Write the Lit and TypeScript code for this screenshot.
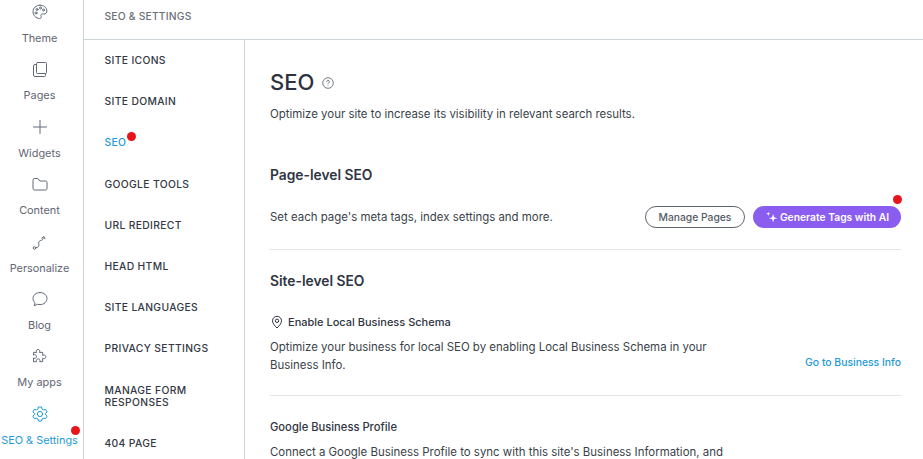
import { LitElement, html, css, svg } from "lit";
import { customElement } from "lit/decorators.js";

const stroke = (c: unknown) => html`<svg class="ic" viewBox="0 0 20 20" fill="none" stroke="currentColor" stroke-width="1" stroke-linecap="round" stroke-linejoin="round">${c}</svg>`;

const rail = [
  { label: "Theme", icon: svg`<path d="M10 3.200c-4 0-7 2.800-7 6.400 0 3.700 3 6.900 6.600 6.900 1.200 0 1.800-.8 1.600-1.700-.2-1-.6-1.500-.1-2.200.6-.8 1.700-.5 2.900-.6 1.900-.1 2.900-1.300 2.900-3C16.900 5.500 13.800 3.200 10 3.200Z"/><circle cx="7" cy="7.500" r="1"/><circle cx="10.500" cy="6" r="1"/><circle cx="13.500" cy="8" r="1"/><circle cx="6" cy="11" r="1"/>` },
  { label: "Pages", icon: svg`<rect x="6.500" y="3.500" width="10" height="11" rx="1"/><path d="M6.500 5.500H5a1.500 1.500 0 0 0-1.500 1.500v9A1.500 1.500 0 0 0 5 17.500h9.500a1 1 0 0 0 1-1V14.500"/>` },
  { label: "Widgets", icon: svg`<path d="M10 3.500v13M3.500 10h13"/>` },
  { label: "Content", icon: svg`<path d="M3 6a1.500 1.500 0 0 1 1.500-1.500h3.300l2 2.500h5.700A1.500 1.500 0 0 1 17 8.500v6a1.500 1.500 0 0 1-1.500 1.500h-11A1.500 1.500 0 0 1 3 14.500Z"/>` },
  { label: "Personalize", icon: svg`<circle cx="4.500" cy="16" r="1.300"/><path d="M5.800 15.700c2.700-.3 3.300-1.500 3-3.500-.3-2 .2-3.500 2-3.700 1.200-.2 2-.8 2.700-2.500"/><path d="M11.800 6l2-1.500 1.200 2.300"/>` },
  { label: "Blog", icon: svg`<path d="M10 3.500c-4 0-7 2.700-7 6 0 1.700.8 3.200 2 4.300l-.8 3 3.200-1.500c.8.200 1.700.300 2.600.300 4 0 7-2.700 7-6.100 0-3.300-3-6-7-6Z"/>` },
  { label: "My apps", icon: svg`<path d="M8 3.500c1 0 1.800.8 1.800 1.700 0 .5-.2.800-.4 1.200h3.300v3c.4-.3.800-.4 1.300-.4 1 0 1.800.8 1.800 1.800s-.8 1.800-1.800 1.800c-.5 0-.9-.2-1.300-.4v3.500h-3c.2-.4.300-.7.300-1.100 0-1-.8-1.800-1.800-1.800s-1.900.8-1.900 1.800c0 .4.100.7.300 1.100H3.500v-3.700c.4.300.8.400 1.200.4 1 0 1.800-.8 1.800-1.800S5.700 8.600 4.700 8.600c-.4 0-.8.200-1.200.4V6.400h3.200c-.2-.4-.4-.7-.4-1.200 0-.9.700-1.700 1.700-1.700Z"/>` },
  { label: "SEO & Settings", active: true, icon: svg`<circle cx="10" cy="10" r="2.600"/><path d="M8.500 3h3l.5 2 1.600.9 2-.6 1.500 2.600-1.500 1.400v1.400l1.500 1.400-1.500 2.600-2-.6-1.600.9-.5 2h-3l-.5-2-1.600-.9-2 .6-1.500-2.600 1.500-1.400V9.300L2.900 7.900l1.500-2.600 2 .6L8 5Z"/>` },
];

const nav = ["SITE ICONS", "SITE DOMAIN", "SEO", "GOOGLE TOOLS", "URL REDIRECT", "HEAD HTML", "SITE LANGUAGES", "PRIVACY SETTINGS", "MANAGE FORM RESPONSES", "404 PAGE"];

@customElement("app-root")
export class AppRoot extends LitElement {
  static styles = css`
    :host { display: block; width: 923px; height: 459px; overflow: hidden; background: #fff; font-family: "Inter", "Liberation Sans", sans-serif; color: #2f3542; }
    * { box-sizing: border-box; }
    .shell { display: flex; height: 459px; }
    .rail { width: 84px; flex: none; border-right: 1px solid #cfd3d6; display: flex; flex-direction: column; overflow: hidden; padding-right: 4px; }
    .rail-item { height: 57.400px; flex: none; display: flex; flex-direction: column; align-items: center; color: #5f6673; font-size: 10.900px; position: relative; white-space: nowrap; }
    .rail-item .ic { width: 20px; height: 20px; margin-top: 2px; color: #626977; flex: none; }
    .rail-item .lab { margin-top: 10px; line-height: 13px; }
    .rail-item.active, .rail-item.active .ic { color: #1f9ad6; }
    .dot { position: absolute; width: 9px; height: 9px; border-radius: 50%; background: #e7141c; }
    .rail-item .dot { left: 71px; top: 24px; }
    .right { flex: 1; min-width: 0; display: flex; flex-direction: column; }
    .top { height: 40px; flex: none; border-bottom: 1px solid #cdd5d8; padding-left: 20.500px; font-size: 10.300px; line-height: 32px; color: #6a6f78; font-weight: 500; letter-spacing: 0.2px; }
    .cols { display: flex; flex: 1; min-height: 0; }
    .nav { width: 161px; flex: none; border-right: 1px solid #cdd5d8; padding: 0 0 0 20.500px; overflow: hidden; }
    .nav-list { margin-top: -0.450px; }
    .nav-item { height: 41.150px; display: flex; align-items: center; font-size: 10.300px; font-weight: 500; color: #333843; letter-spacing: 0.35px; line-height: 12px; position: relative; width: 118px; }
    .nav-item.tall { height: 54px; }
    .nav-item.active { color: #1f9ad6; }
    .nav-item .dot { left: 22px; top: 10px; }
    .main { flex: 1; min-width: 0; padding: 0 22px 0 25px; overflow: hidden; }
    .h1row { display: flex; align-items: center; gap: 8px; margin-top: 29px; height: 26px; }
    h1 { margin: 0; font-size: 22px; font-weight: 500; color: #2c3240; line-height: 26px; }
    .help { width: 12px; height: 12px; color: #555b66; margin-top: 1px; }
    p { margin: 0; font-size: 11.450px; line-height: 18px; color: #3a3f49; }
    .sub { margin-top: 10px; }
    h2 { margin: 0; font-size: 13.800px; font-weight: 600; line-height: 18px; color: #2f3542; }
    .s1 { margin-top: 43px; }
    .row { display: flex; align-items: center; justify-content: space-between; margin-top: 21px; height: 23px; }
    .btns { display: flex; gap: 8px; position: relative; }
    .btn { height: 22px; border-radius: 11px; font-size: 10.300px; font-weight: 500; display: flex; align-items: center; justify-content: center; }
    .outline { width: 100px; border: 1px solid #5f6570; color: #555b66; background: #fff; }
    .primary { width: 148px; background: #8b5cf0; color: #fff; gap: 2px; font-weight: 600; }
    .primary svg { width: 13px; height: 13px; }
    .btns .dot { right: -1px; top: -11px; }
    hr { border: 0; border-top: 1px solid #e3e4e6; margin: 0; }
    .h1 { margin-top: 21px; }
    .s2 { margin-top: 22px; }
    .h3row { display: flex; align-items: center; gap: 5px; margin-top: 24px; height: 16px; font-size: 11px; font-weight: 500; color: #2f3542; }
    .pin { width: 14px; height: 14px; color: #2f3542; margin-left: -0.500px; margin-right: -0.500px; }
    .biz { display: flex; justify-content: space-between; align-items: flex-end; margin-top: 8px; }
    .biz p { width: 460px; }
    .link { color: #1f9ad6; font-size: 10.400px; font-weight: 500; line-height: 18px; margin-bottom: 2px; }
    .h2 { margin-top: 21px; }
    .h4 { font-size: 11.200px; font-weight: 500; line-height: 16px; margin-top: 23px; color: #2f3542; }
    .last { margin-top: 8px; width: 480px; white-space: nowrap; }
  `;

  render() {
    return html`<div class="shell">
      <aside class="rail">
        ${rail.map((r) => html`<div class="rail-item ${r.active ? "active" : ""}">
          ${stroke(r.icon)}<span class="lab">${r.label}</span>${r.active ? html`<span class="dot"></span>` : ""}
        </div>`)}
      </aside>
      <div class="right">
        <div class="top">SEO &amp; SETTINGS</div>
        <div class="cols">
          <nav class="nav"><div class="nav-list">
            ${nav.map((n) => html`<div class="nav-item ${n === "SEO" ? "active" : ""} ${n.startsWith("MANAGE") ? "tall" : ""}">
              ${n}${n === "SEO" ? html`<span class="dot"></span>` : ""}
            </div>`)}
          </div></nav>
          <main class="main">
            <div class="h1row"><h1>SEO</h1>
              <svg class="help" viewBox="0 0 12 12" fill="none" stroke="currentColor" stroke-width=".8"><circle cx="6" cy="6" r="5.300"/><path d="M4.600 4.700c0-.8.600-1.300 1.400-1.300s1.400.5 1.400 1.200c0 1.100-1.400 1.100-1.400 2.200" stroke-linecap="round"/><path d="M6 8.300v.6"/></svg>
            </div>
            <p class="sub">Optimize your site to increase its visibility in relevant search results.</p>
            <h2 class="s1">Page-level SEO</h2>
            <div class="row">
              <p>Set each page's meta tags, index settings and more.</p>
              <div class="btns">
                <div class="btn outline">Manage Pages</div>
                <div class="btn primary">
                  <svg viewBox="0 0 12 12" fill="#fff"><path d="M7.500 3.500 8.400 6.600 11.500 7.500 8.400 8.400 7.500 11.500 6.600 8.400 3.500 7.500 6.600 6.600Z"/><path d="M3 1.500 3.500 3 5 3.500 3.500 4 3 5.500 2.500 4 1 3.500 2.500 3Z"/></svg>
                  Generate Tags with AI</div>
                <span class="dot"></span>
              </div>
            </div>
            <hr class="h1" />
            <h2 class="s2">Site-level SEO</h2>
            <div class="h3row">
              <svg class="pin" viewBox="0 0 14 14" fill="none" stroke="currentColor" stroke-width="1"><path d="M7 13C4.500 10.500 2.500 8.300 2.500 5.800a4.500 4.500 0 0 1 9 0C11.500 8.300 9.500 10.500 7 13Z" stroke-linejoin="round"/><circle cx="7" cy="5.800" r="1.700"/></svg>
              Enable Local Business Schema</div>
            <div class="biz">
              <p>Optimize your business for local SEO by enabling Local Business Schema in your Business Info.</p>
              <span class="link">Go to Business Info</span>
            </div>
            <hr class="h2" />
            <div class="h4">Google Business Profile</div>
            <p class="last">Connect a Google Business Profile to sync with this site's Business Information, and</p>
          </main>
        </div>
      </div>
    </div>`;
  }
}
